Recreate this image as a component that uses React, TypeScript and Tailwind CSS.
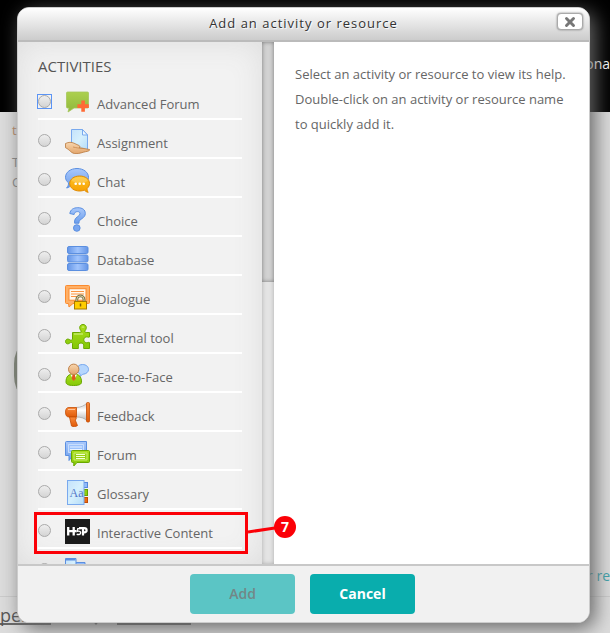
import { ReactNode, useState } from 'react';
import { X } from 'lucide-react';

interface Activity {
  id: string;
  label?: string;
  icon: ReactNode;
}

/* Shared gradients for the activity icons */
function IconGradients() {
  return (
    <svg width="0" height="0" className="absolute" aria-hidden="true">
      <defs>
        <linearGradient id="blue" x1="0" y1="0" x2="0" y2="1">
          <stop offset="0" stopColor="#a9c8fb" />
          <stop offset="1" stopColor="#6c9eec" />
        </linearGradient>
        <linearGradient id="slab" x1="0" y1="0" x2="1" y2="0">
          <stop offset="0" stopColor="#6495e6" />
          <stop offset="0.5" stopColor="#a0c4fd" />
          <stop offset="1" stopColor="#6495e6" />
        </linearGradient>
        <linearGradient id="paper" x1="0" y1="0" x2="1" y2="1">
          <stop offset="0" stopColor="#c4e2fb" />
          <stop offset="0.5" stopColor="#d6f0fd" />
          <stop offset="1" stopColor="#b4dcf8" />
        </linearGradient>
        <linearGradient id="green" x1="0" y1="0" x2="0" y2="1">
          <stop offset="0" stopColor="#aadd1c" />
          <stop offset="1" stopColor="#84c808" />
        </linearGradient>
        <linearGradient id="olive" x1="0" y1="0" x2="0" y2="1">
          <stop offset="0" stopColor="#acd04e" />
          <stop offset="1" stopColor="#90b83c" />
        </linearGradient>
        <linearGradient id="amber" x1="0" y1="0" x2="0" y2="1">
          <stop offset="0" stopColor="#ffc526" />
          <stop offset="1" stopColor="#f79e00" />
        </linearGradient>
        <linearGradient id="skin" x1="0" y1="0" x2="0" y2="1">
          <stop offset="0" stopColor="#f8d6ae" />
          <stop offset="1" stopColor="#e2a56c" />
        </linearGradient>
        <linearGradient id="orange" x1="0" y1="0" x2="0" y2="1">
          <stop offset="0" stopColor="#f98a3c" />
          <stop offset="1" stopColor="#e05a08" />
        </linearGradient>
        <linearGradient id="silver" x1="0" y1="0" x2="0" y2="1">
          <stop offset="0" stopColor="#c8c8c8" />
          <stop offset="0.4" stopColor="#ffffff" />
          <stop offset="1" stopColor="#b4b4b4" />
        </linearGradient>
      </defs>
    </svg>
  );
}

function Icon({ children }: { children: ReactNode }) {
  return (
    <svg viewBox="0 0 25 25" width="25" height="25" className="shrink-0" aria-hidden="true">
      {children}
    </svg>
  );
}

const activities: Activity[] = [
  {
    id: 'hsuforum',
    label: 'Advanced Forum',
    icon: (
      <Icon>
        <path d="M2.500 2h20q1 0 1 1v14q0 1-1 1H9l-6 4 1-4H2.500q-1 0-1-1V3q0-1 1-1z" fill="url(#olive)" stroke="#a5c65a" strokeWidth="0.8" />
        <path d="M16.300 10.500h3.600v3.800h3.900v3.600h-3.900v3.900h-3.600v-3.900h-3.900v-3.600h3.900z" fill="#ff6a35" />
      </Icon>
    ),
  },
  {
    id: 'assign',
    label: 'Assignment',
    icon: (
      <Icon>
        <path d="M6.500 .5h11l5 5.500v14.500h-16z" fill="url(#paper)" stroke="#79a9ee" />
        <path d="M17.500 .5v5.500h5z" fill="#eef8ff" stroke="#79a9ee" />
        <path d="M.5 14.500c3-1.500 6-1.500 8.500-.3l5 2.300c1.200.6 1.200 1.800 0 2.200l5 .8 5.500 1c.6 1.200-1.500 1.800-4 2.200-3 .6-6 2-9.500 2-5 0-6-4-10.500-6z" fill="url(#skin)" stroke="#b9783e" strokeWidth="0.8" />
        <path d="M8 18c3 .8 6 1.200 11 1.500" fill="none" stroke="#c88a52" strokeWidth="0.8" />
      </Icon>
    ),
  },
  {
    id: 'chat',
    label: 'Chat',
    icon: (
      <Icon>
        <path d="M12 .5c6.500 0 11.500 3.800 11.500 8.800S18.500 18 12 18c-2 0-4-.4-5.600-1.200-1 1.500-2.800 2.800-4.800 3.200 1.500-1.500 2-3.500 1.900-5.100C1.600 13.300.5 11.400.5 9.300.5 4.300 5.500.5 12 .5z" fill="url(#blue)" stroke="#5b8fe0" />
        <path d="M14.700 8C9 8 4.700 11.200 4.700 15.500S9 23 14.700 23c1.800 0 3.200-.3 4.700-.9 1 1.200 2 1.900 3.800 2.200-.9-1.200-1.200-2.700-1-4 1.500-1.300 2.300-3 2.300-4.800 0-4.300-4.100-7.500-9.800-7.500z" fill="url(#amber)" stroke="#e08a00" />
        <ellipse cx="14.700" cy="12" rx="8" ry="3" fill="#fff" opacity="0.2" />
        <circle cx="10.700" cy="15.800" r="1.300" fill="#fff" />
        <circle cx="14.700" cy="15.800" r="1.300" fill="#fff" />
        <circle cx="18.700" cy="15.800" r="1.300" fill="#fff" />
      </Icon>
    ),
  },
  {
    id: 'choice',
    label: 'Choice',
    icon: (
      <Icon>
        <path d="M4.800 6.500C5.500 2.500 8.500.7 12.800.7c4.500 0 7.500 2 7.500 5.800 0 5-6.300 5.500-6.300 8.500v1.200H9.600V14c0-4 5.400-4.500 5.400-7.200 0-1.500-1-2.200-2.500-2.200-2 0-3 1-3.400 2.900z" fill="url(#blue)" stroke="#5b8fe0" />
        <circle cx="11.800" cy="21" r="3.300" fill="#78a6f0" stroke="#5b8fe0" />
      </Icon>
    ),
  },
  {
    id: 'data',
    label: 'Database',
    icon: (
      <Icon>
        <rect x="2.500" y=".5" width="20.500" height="7" rx="1.500" fill="url(#slab)" stroke="#5b8fe0" />
        <rect x="2.500" y="9" width="20.500" height="7" rx="1.500" fill="url(#slab)" stroke="#5b8fe0" />
        <rect x="2.500" y="17.500" width="20.500" height="7" rx="1.500" fill="url(#slab)" stroke="#5b8fe0" />
      </Icon>
    ),
  },
  {
    id: 'dialogue',
    label: 'Dialogue',
    icon: (
      <Icon>
        <path d="M1.500 .5h22q1 0 1 1v16q0 1-1 1H8L4 22l-.5-3.500h-2q-1 0-1-1v-16q0-1 1-1z" fill="#ffb066" stroke="#fb8a2e" />
        <rect x="4" y="3.700" width="17" height="11.500" fill="#fff8ee" stroke="#fb8a2e" />
        <path d="M6 6.500h13M6 9h13M6 11.500h6" stroke="#fb9440" />
        <path d="M11.800 17v-2.500a3.600 3.600 0 0 1 7.200 0V17" fill="none" stroke="#77704c" strokeWidth="2.800" />
        <path d="M11.800 17v-2.500a3.600 3.600 0 0 1 7.200 0V17" fill="none" stroke="#d8d0a0" strokeWidth="1" />
        <rect x="9.500" y="16.500" width="12" height="7.500" fill="#ffcd00" stroke="#a87a00" />
        <path d="M15.500 18.500v3" stroke="#80600a" strokeWidth="1.500" />
      </Icon>
    ),
  },
  {
    id: 'lti',
    label: 'External tool',
    icon: (
      <Icon>
        <path d="M7.500 8.500h7.300c1.400 0 1.600-1.200 1-2C13.500 3.500 15 .5 18 .5s4.500 3 2.200 6c-.6.8-.4 2 1 2h3.300v4.500c-1 .6-2-.3-3.100-.1-1.700.3-2.600 1.500-2.600 2.800s.9 2.700 2.600 3c1.100.2 2.100-.8 3.100-.1v5.900h-5.800c-.5-1 .3-2.300 0-3.500-.3-1.200-1.300-2-2.700-2s-2.400.8-2.700 2c-.3 1.200.5 2.500 0 3.500H7.500v-5c-.3-1.200-1.800-1.200-2.700-.5C2.500 20.800.5 19.500.5 17.500s2-3.300 4.300-1.700c.9.600 2.400.6 2.700-.6z" fill="url(#green)" stroke="#69a700" />
        <path d="M9 10h9M16.800 3.500q1.200-1.500 2.400 0" fill="none" stroke="#d6f58c" />
      </Icon>
    ),
  },
  {
    id: 'facetoface',
    label: 'Face-to-Face',
    icon: (
      <Icon>
        <path d="M17.500 1.500c3.500 0 6 2.100 6 4.900 0 2.600-2.300 4.600-5.300 4.800-1 .1-2 1.800-3.700 2.200.8-1.200.7-2.300.3-2.800-1.900-.8-3-2.300-3-4.200 0-2.800 2.400-4.900 5.700-4.900z" fill="#b5d6fd" stroke="#73a5ee" />
        <path d="M1 19c0-5.500 2.500-8 7.700-8s7.800 2.500 7.800 8c0 2-1.800 3.500-7.800 3.500S1 21 1 19z" fill="url(#green)" stroke="#69a700" />
        <path d="M5.500 11.500l3.200 6 3.300-6z" fill="#fff" />
        <path d="M7.500 11.800h2.400l.8 4-2 2.200-2-2.200z" fill="#e0591c" />
        <circle cx="8.700" cy="6.300" r="5.200" fill="url(#skin)" stroke="#b9783e" strokeWidth="0.9" />
      </Icon>
    ),
  },
  {
    id: 'feedback',
    label: 'Feedback',
    icon: (
      <Icon>
        <path d="M11 5.500c5 0 8.500-2 11-4.500v18c-2.500-3-6-4-11-4z" fill="url(#silver)" stroke="#a4a4a4" strokeWidth="0.7" />
        <path d="M4 5.500h7.500V15H4C1.800 15 .5 13.500 .5 10.200S1.800 5.500 4 5.500z" fill="url(#orange)" stroke="#c44c04" strokeWidth="0.8" />
        <path d="M4.500 15h6.500l.2 2-1 1 2.300 5.500c-1 1.200-4.500 1.400-6 .5z" fill="url(#orange)" stroke="#c44c04" strokeWidth="0.8" />
        <rect x="21.500" y=".5" width="3" height="19.500" rx="1" fill="url(#orange)" stroke="#c44c04" strokeWidth="0.8" />
        <path d="M3 7.500h7" stroke="#ffc49a" />
      </Icon>
    ),
  },
  {
    id: 'forum',
    label: 'Forum',
    icon: (
      <Icon>
        <path d="M1.500 .5h20v14H8L4 19.500v-5H.500v-13q0-1 1-1z" fill="url(#blue)" stroke="#5b8fe0" />
        <path d="M3.500 3.500h15v8h-15z" fill="#9cc2fc" stroke="#c8defd" />
        <path d="M5 6h12M5 8.500h12" stroke="#e8f2ff" />
        <path d="M7.500 9.500h16q1 0 1 1v10q0 1-1 1H12L8.800 25v-3.500H7.500q-1 0-1-1v-10q0-1 1-1z" fill="url(#green)" stroke="#69a700" />
        <path d="M9 12h13v7H9z" fill="#97d012" stroke="#c8ee70" />
        <path d="M11 13.500h9M11 15.500h9M11 17.500h9" stroke="#f4ffd8" />
      </Icon>
    ),
  },
  {
    id: 'glossary',
    label: 'Glossary',
    icon: (
      <Icon>
        <rect x="18" y="2.500" width="4.500" height="5" fill="#90bafa" stroke="#5687dc" />
        <rect x="18" y="9.500" width="4.500" height="6" fill="#8fce10" stroke="#65a300" />
        <rect x="18" y="17.500" width="4.500" height="5" fill="#ee6a10" stroke="#c44c04" />
        <rect x="2.500" y=".5" width="16.500" height="24" fill="url(#paper)" stroke="#79a9ee" />
        <text x="4.500" y="16.500" fontFamily="Liberation Serif, serif" fontSize="12" fill="#5478c8">Aa</text>
      </Icon>
    ),
  },
  {
    id: 'hvp',
    label: 'Interactive Content',
    icon: (
      <Icon>
        <rect width="25" height="25" fill="#1b1b1b" />
        <path d="M3.200 8v8.500M8.700 8v8.500M3.200 12.200h8.300" stroke="#fff" strokeWidth="2.300" fill="none" />
        <path d="M15.500 9.600h-2.700l-.6 2.700c2.800-.6 3.700.5 3.400 1.900-.3 1.300-2.200 1.800-3.900.9" stroke="#fff" strokeWidth="1.400" fill="none" />
        <path d="M14 9.200h5.200c3.200 0 3.200 4.100 0 4.100h-1.700M18 9v7.500" stroke="#fff" strokeWidth="2.200" fill="none" />
      </Icon>
    ),
  },
  {
    id: 'imscp',
    icon: (
      <Icon>
        <path d="M10 4.500h10v16H10z" fill="#90bafa" stroke="#5b8fe0" />
        <path d="M.5 .5h10.500v20H.5z" fill="url(#paper)" stroke="#5b8fe0" />
        <path d="M1 1.500h9.500" stroke="#5b8fe0" strokeWidth="2" />
      </Icon>
    ),
  },
];

function PageBehind() {
  return (
    <div className="flex h-full flex-col overflow-hidden bg-[#dcdcdc] text-[13px] text-[#888]">
      <div className="flex h-28 shrink-0 items-center justify-end bg-black pt-4 text-sm text-white">ona</div>
      <div className="flex flex-1 flex-col border-b border-[#cbcbcb]">
        <div className="px-3 pt-2 leading-5 text-[#b78b68]">t</div>
        <div className="px-3 pt-3 leading-5">T</div>
        <div className="px-3 leading-5">C</div>
        <div className="ml-[14px] mt-[140px] h-[76px] w-16 rounded-full bg-[#7f8577]" />
        <div className="mt-auto pb-3 text-right text-sm leading-4 text-[#3fa2ab]">or re</div>
      </div>
      <div className="flex h-9 shrink-0 items-end gap-10 pb-2 text-[#555]">
        <div className="w-[51px] border-b-2 border-[#666] text-lg leading-4">per</div>
        <svg width="10" height="6" viewBox="0 0 10 6" aria-hidden="true">
          <path d="M0 0h10L5 6z" fill="#666" />
        </svg>
        <div className="-ml-6 w-[74px] border-b-2 border-[#666]" />
      </div>
    </div>
  );
}

/* Red outline, leader line and step number around the highlighted row */
function StepMarker({ step }: { step: number }) {
  return (
    <div className="pointer-events-none absolute left-4 top-[470px] flex items-start">
      <div className="h-[42px] w-[214px] border-3 border-[#fb0007]" />
      <svg width="27" height="24" viewBox="0 0 27 24" aria-hidden="true">
        <path d="M0 20L27 16" stroke="#fb0007" strokeWidth="3" />
      </svg>
      <span className="-ml-px mt-1 flex size-[22px] items-center justify-center rounded-full bg-[#fb0007] text-sm font-bold text-white">
        {step}
      </span>
    </div>
  );
}

export default function App() {
  const [selected, setSelected] = useState('');

  return (
    <div className="relative h-screen overflow-hidden font-['Open_Sans','Noto_Sans',sans-serif]">
      <IconGradients />
      <PageBehind />

      <div className="absolute inset-0 flex pb-[10px] pl-[17px] pr-5 pt-[7px]">
        <div
          role="dialog"
          aria-labelledby="chooser-title"
          className="flex min-w-0 flex-1 flex-col overflow-hidden rounded-xl border border-[#ccc] bg-white shadow-[5px_5px_20px_0_#666]"
        >
          {/* Header */}
          <div className="relative flex h-[34px] shrink-0 items-center justify-center border-b-2 border-[#bbb] bg-linear-to-b from-white to-[#ccc]">
            <h1 id="chooser-title" className="text-[13px] tracking-[1px] text-[#333] [text-shadow:1px_1px_1px_#fff]">
              Add an activity or resource
            </h1>
            <button
              type="button"
              aria-label="Close"
              className="absolute right-[6px] top-[5px] flex h-[17px] w-[26px] items-center justify-center rounded-sm border border-[#aaa] bg-white text-[#777] shadow-[0_0_2px_#777]"
            >
              <X size={14} strokeWidth={5} />
            </button>
          </div>

          {/* Body */}
          <div className="relative flex min-h-0 flex-1">
            <div className="w-[244px] shrink-0 overflow-hidden bg-[#f2f2f2] px-5 pt-3 shadow-[inset_0_0_30px_#ddd]">
              <h2 className="h-[27px] text-[15px] leading-6 text-[#555]">ACTIVITIES</h2>
              {activities.map((activity) => (
                <label
                  key={activity.id}
                  className="flex h-[39px] items-center border-b-2 border-white pt-[6px] text-[13px] text-[#666]"
                >
                  <span className="mb-[2px] flex size-[13px] shrink-0 focus-within:outline focus-within:outline-[#5b94f5]">
                    <input
                      type="radio"
                      name="activity"
                      aria-label={activity.label ?? activity.id}
                      autoFocus={activity.id === 'hsuforum'}
                      checked={selected === activity.id}
                      onChange={() => setSelected(activity.id)}
                      className="size-[13px] appearance-none rounded-full border border-[#aaa] bg-linear-to-b from-[#eee] to-[#d4d4d4] outline-none checked:bg-[#777]"
                    />
                  </span>
                  <span className="ml-[14px] mr-[7px]">{activity.icon}</span>
                  {activity.label && <span className="whitespace-nowrap pt-1">{activity.label}</span>}
                </label>
              ))}
            </div>

            {/* Scrollbar */}
            <div className="w-3 shrink-0 bg-[#e4e4e4] shadow-[inset_0_0_4px_#aaa]">
              <div className="h-[46%] bg-[#d2d2d2] shadow-[inset_0_0_4px_#777]" />
            </div>

            <div className="flex-1 bg-white pl-[21px] pr-5 pt-5 text-[13px] leading-[25px] text-[#666]">
              <p>Select an activity or resource to view its help. Double-click on an activity or resource name to quickly add it.</p>
            </div>

            <StepMarker step={7} />
          </div>

          {/* Footer */}
          <div className="flex shrink-0 justify-center gap-[15px] border-t-2 border-[#c8c8c8] bg-[#f1f1f1] pb-2 pr-[2px] pt-2">
            <button
              type="button"
              disabled={!selected}
              className="h-10 w-[105px] rounded bg-[#09adad] text-sm font-bold text-white disabled:bg-[#5bc5c5] disabled:font-semibold disabled:text-[#728787]"
            >
              Add
            </button>
            <button type="button" className="h-10 w-[105px] rounded bg-[#09adad] text-sm font-bold text-white">
              Cancel
            </button>
          </div>
        </div>
      </div>
    </div>
  );
}
